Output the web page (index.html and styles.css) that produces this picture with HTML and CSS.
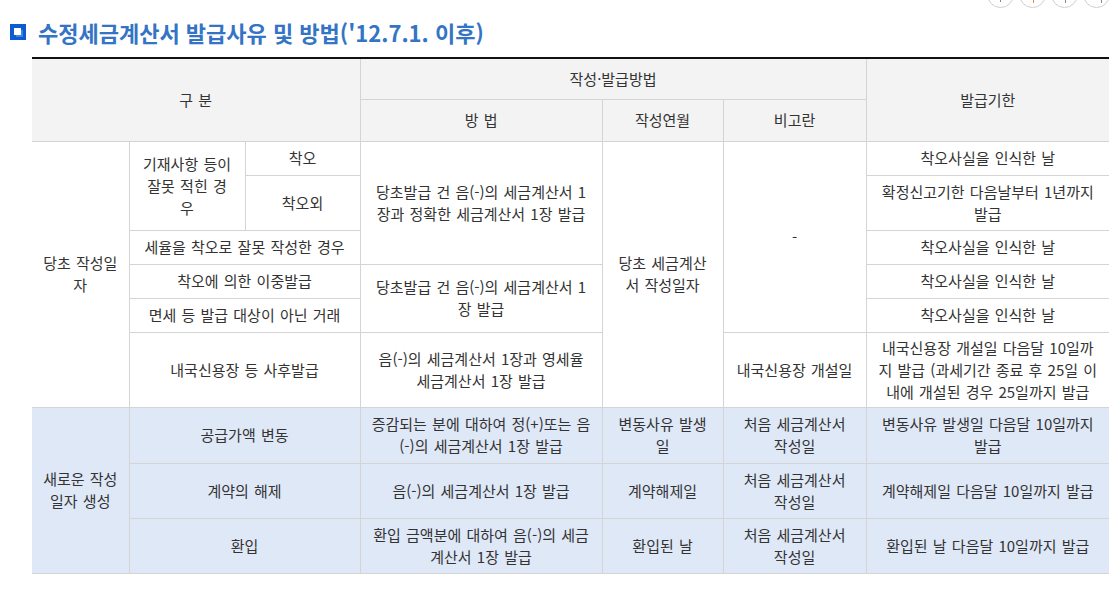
FILE: index.html
```html
<!DOCTYPE html>
<html lang="ko">
<head>
<meta charset="utf-8">
<title>수정세금계산서 발급사유 및 방법</title>
<link rel="stylesheet" href="styles.css">
</head>
<body>
<div class="toolbar">
  <span class="tbtn"><i class="mark m1"></i></span>
  <span class="tbtn"><i class="mark m2"></i></span>
  <span class="tbtn"><i class="mark m3"></i></span>
  <span class="tbtn"><i class="mark m4"></i></span>
</div>
<h2 class="title"><span class="ico"><span class="ico-in"></span></span>수정세금계산서 발급사유 및 방법('12.7.1. 이후)</h2>
<table class="grid">
  <colgroup>
    <col class="c1"><col class="c2"><col class="c3"><col class="c4"><col class="c5"><col class="c6"><col class="c7">
  </colgroup>
  <thead>
    <tr class="h1">
      <th colspan="3" rowspan="2">구 분</th>
      <th colspan="3">작성·발급방법</th>
      <th rowspan="2">발급기한</th>
    </tr>
    <tr class="h2">
      <th>방 법</th>
      <th>작성연월</th>
      <th>비고란</th>
    </tr>
  </thead>
  <tbody>
    <tr class="r34">
      <td rowspan="6" class="tight">당초 작성일<br>자</td>
      <td rowspan="2">기재사항 등이 잘못 적힌 경우</td>
      <td>착오</td>
      <td rowspan="3">당초발급 건 음(-)의 세금계산서 1장과 정확한 세금계산서 1장 발급</td>
      <td rowspan="6">당초 세금계산서 작성일자</td>
      <td rowspan="5">-</td>
      <td>착오사실을 인식한 날</td>
    </tr>
    <tr class="r55">
      <td>착오외</td>
      <td>확정신고기한 다음날부터 1년까지 발급</td>
    </tr>
    <tr class="r34">
      <td colspan="2">세율을 착오로 잘못 작성한 경우</td>
      <td>착오사실을 인식한 날</td>
    </tr>
    <tr class="r34">
      <td colspan="2">착오에 의한 이중발급</td>
      <td rowspan="2">당초발급 건 음(-)의 세금계산서 1장 발급</td>
      <td>착오사실을 인식한 날</td>
    </tr>
    <tr class="r34">
      <td colspan="2">면세 등 발급 대상이 아닌 거래</td>
      <td>착오사실을 인식한 날</td>
    </tr>
    <tr class="r75">
      <td colspan="2">내국신용장 등 사후발급</td>
      <td>음(-)의 세금계산서 1장과 영세율 세금계산서 1장 발급</td>
      <td>내국신용장 개설일</td>
      <td class="tight">내국신용장 개설일 다음달 10일까<br>지 발급 (과세기간 종료 후 25일 이<br>내에 개설된 경우 25일까지 발급</td>
    </tr>
    <tr class="blue r56">
      <td rowspan="3" class="tight">새로운 작성<br>일자 생성</td>
      <td colspan="2">공급가액 변동</td>
      <td class="tight">증감되는 분에 대하여 정(+)또는 음<br>(-)의 세금계산서 1장 발급</td>
      <td>변동사유 발생일</td>
      <td>처음 세금계산서 작성일</td>
      <td>변동사유 발생일 다음달 10일까지 발급</td>
    </tr>
    <tr class="blue r55">
      <td colspan="2">계약의 해제</td>
      <td>음(-)의 세금계산서 1장 발급</td>
      <td>계약해제일</td>
      <td>처음 세금계산서 작성일</td>
      <td>계약해제일 다음달 10일까지 발급</td>
    </tr>
    <tr class="blue r55">
      <td colspan="2">환입</td>
      <td>환입 금액분에 대하여 음(-)의 세금계산서 1장 발급</td>
      <td>환입된 날</td>
      <td>처음 세금계산서 작성일</td>
      <td>환입된 날 다음달 10일까지 발급</td>
    </tr>
  </tbody>
</table>
</body>
</html>
```

FILE: styles.css
```css
html, body {
  margin: 0;
  padding: 0;
  background: #ffffff;
}
body {
  font-family: "Noto Sans CJK KR", "Noto Sans", sans-serif;
  color: #333333;
  overflow: hidden;
}
.toolbar {
  display: flex;
  justify-content: flex-end;
  gap: 5px;
  height: 27px;
  margin-top: -19px;
  padding-right: 9px;
}
.tbtn {
  position: relative;
  width: 25px;
  height: 25px;
  border: 1px solid #cfcfcf;
  border-radius: 50%;
  background: #ffffff;
}
.mark {
  position: absolute;
  bottom: 4px;
  width: 1px;
  height: 4px;
  background: #888888;
}
.m1 { left: 12px; height: 2px; bottom: 5px; }
.m2 { left: 13px; background: #f08a24; }
.m3 { left: 13px; }
.m4 { left: 17px; }

.title {
  display: flex;
  align-items: center;
  gap: 12px;
  margin: 0 0 13px 0;
  padding: 12px 0 0 10px;
  height: 24px;
  line-height: 24px;
  font-size: 22px;
  font-weight: bold;
  color: #3474c4;
}
.ico {
  position: relative;
  flex: none;
  width: 16px;
  height: 16px;
  background: #0d5bd0;
}
.ico-in {
  position: absolute;
  left: 4px;
  top: 4px;
  width: 7px;
  height: 7px;
  background: #ffffff;
  box-shadow: 2px 2px 0 0 #3d86e6;
}

.grid {
  margin-left: 32px;
  width: 1077px;
  border-collapse: collapse;
  table-layout: fixed;
  border-top: 2px solid #111111;
  font-size: 15px;
  line-height: 22px;
  word-spacing: 1px;
}
.c1 { width: 97px; }
.c2 { width: 116px; }
.c3 { width: 115px; }
.c4 { width: 242px; }
.c5 { width: 121px; }
.c6 { width: 143px; }
.c7 { width: 243px; }

.grid th, .grid td {
  border: 1px solid #d4d4d4;
  padding: 0 12px;
  text-align: center;
  vertical-align: middle;
  font-weight: normal;
  color: #333333;
}
.grid td.tight {
  padding: 0 4px;
  white-space: nowrap;
}
.grid tr:first-child th { border-top: 2px solid #111111; }
.grid th:first-child, .grid td:first-child { border-left: none; }
.grid tr > :last-child { border-right: none; }
.grid thead th { background: #f3f3f3; }
.h1 { height: 41px; }
.h2 { height: 42px; }
.r34 { height: 34px; }
.r55 { height: 55px; }
.r56 { height: 56px; }
.r75 { height: 75px; }
.blue td { background: #dfe8f7; }
```
